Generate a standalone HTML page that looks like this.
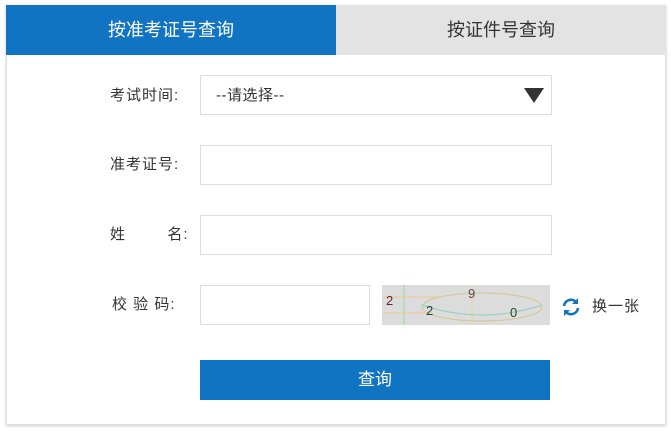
<!DOCTYPE html>
<html><head><meta charset="utf-8"><style>
body{margin:0;width:671px;height:431px;background:#fff;font-family:"Liberation Sans","Noto Sans CJK SC",sans-serif;position:relative;overflow:hidden}
.a{position:absolute}
.box{border:1px solid #dcdcdc;background:#fff;box-sizing:border-box}
.lab{font-size:15px;color:#333;line-height:20px;letter-spacing:1px}
</style></head><body>
<div class="a" style="left:6px;top:5px;width:660px;height:420px;border:1px solid #e0e0e0;border-top:none;box-sizing:border-box;box-shadow:0 1px 3px #ccc"></div>
<div class="a" style="left:6px;top:5px;width:330px;height:50px;background:#1174c2;color:#fff;font-size:18px;text-align:center;line-height:50px">按准考证号查询</div>
<div class="a" style="left:336px;top:5px;width:330px;height:50px;background:#e3e3e3;color:#333;font-size:18px;text-align:center;line-height:50px">按证件号查询</div>
<div class="a lab" style="left:110px;top:86px">考试时间:</div>
<div class="a box" style="left:200px;top:75px;width:352px;height:40px"></div>
<div class="a" style="left:216px;top:86px;font-size:15px;color:#333;line-height:20px;letter-spacing:0.5px">--请选择--</div>
<div class="a" style="left:524px;top:88px;width:0;height:0;border-left:10px solid transparent;border-right:10px solid transparent;border-top:15px solid #333"></div>
<div class="a lab" style="left:110px;top:155px">准考证号:</div>
<div class="a box" style="left:200px;top:145px;width:352px;height:40px"></div>
<div class="a lab" style="left:110px;top:225px">姓&nbsp;&nbsp;&nbsp;&nbsp;&nbsp;&nbsp;&nbsp;&nbsp;名:</div>
<div class="a box" style="left:200px;top:215px;width:352px;height:40px"></div>
<div class="a lab" style="left:112px;top:295px">校&nbsp;验&nbsp;码:</div>
<div class="a box" style="left:200px;top:285px;width:170px;height:40px"></div>
<svg class="a" style="left:382px;top:285px" width="168" height="40">
<rect width="168" height="40" fill="#dcdcdc"/>
<ellipse cx="100" cy="22" rx="60" ry="14" fill="none" stroke="#d2c690"/>
<line x1="22" y1="0" x2="22" y2="40" stroke="#9dd69d"/>
<line x1="90" y1="0" x2="90" y2="40" stroke="#e6d88a"/>
<path d="M0 12 H60 M0 28 H50" stroke="#f0c890"/>
<path d="M40 20 Q100 40 160 20" stroke="#8fd0b8" fill="none"/>
<text x="4" y="20" font-size="13" fill="#6b1a2e">2</text>
<text x="44" y="30" font-size="13" fill="#1c4a2a">2</text>
<text x="86" y="13" font-size="13" fill="#5a4a5a">9</text>
<text x="128" y="32" font-size="13" fill="#1c4a2a">0</text>
</svg>
<svg class="a" style="left:561px;top:297px" width="20" height="20" viewBox="0 0 20 20"><path d="M3 9A7 7 0 0 1 15 5M17 11A7 7 0 0 1 5 15" fill="none" stroke="#1174c2" stroke-width="2.5"/><path d="M17 1V7H11Z M3 19V13H9Z" fill="#1174c2"/></svg>
<div class="a" style="left:592px;top:297px;font-size:15px;color:#333;line-height:20px;letter-spacing:1px">换一张</div>
<div class="a" style="left:200px;top:360px;width:350px;height:40px;background:#1174c2;color:#fff;font-size:17px;text-align:center;line-height:40px">查询</div>
</body></html>
